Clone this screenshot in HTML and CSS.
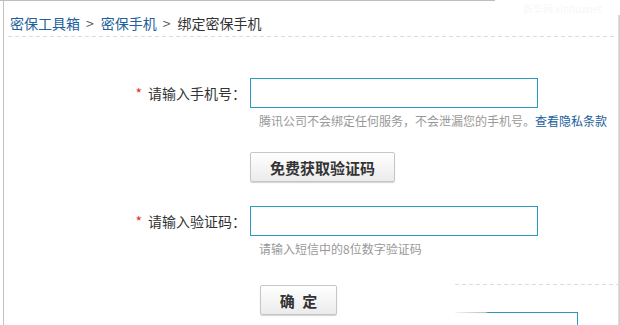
FILE: index.html
```html
<!DOCTYPE html>
<html lang="zh-CN">
<head>
  <meta charset="UTF-8">
  <title>绑定密保手机</title>
  <link rel="stylesheet" href="styles.css">
</head>
<body>
  <div class="topline"></div>
  <div class="page">
    <span class="faint-title">新华网 xinhuanet</span>
    <div class="crumbs">
      <a href="#">密保工具箱</a><span class="sep">&gt;</span><a href="#">密保手机</a><span class="sep">&gt;</span><span class="current">绑定密保手机</span>
    </div>
    <div class="rule"></div>

    <form class="bind-form" onsubmit="return false">
      <div class="row row-phone">
        <label class="label" for="phone"><em>*</em>请输入手机号：</label>
        <div class="field">
          <input type="text" id="phone" class="text-input" autocomplete="off">
          <p class="hint">腾讯公司不会绑定任何服务，不会泄漏您的手机号。<a href="#">查看隐私条款</a></p>
        </div>
      </div>
      <div class="row row-send">
        <span class="label"></span>
        <div class="field">
          <button type="button" class="btn btn-code">免费获取验证码</button>
        </div>
      </div>
      <div class="row row-code">
        <label class="label" for="code"><em>*</em>请输入验证码：</label>
        <div class="field">
          <input type="text" id="code" class="text-input" autocomplete="off">
          <p class="hint">请输入短信中的8位数字验证码</p>
        </div>
      </div>
      <div class="row">
        <span class="label"></span>
        <div class="field">
          <button type="submit" class="btn btn-ok">确 定</button>
        </div>
      </div>
    </form>

    <div class="ghost">
      <div class="ghost-rule"></div>
      <div class="ghost-box"></div>
    </div>
  </div>
</body>
</html>
```

FILE: styles.css
```css
* {
  margin: 0;
  padding: 0;
  box-sizing: border-box;
}
body {
  width: 620px;
  height: 325px;
  overflow: hidden;
  background: #fff;
  font-family: "Noto Sans CJK SC", "Liberation Sans", sans-serif;
  font-size: 14px;
  color: #333;
}
a {
  color: #21609a;
  text-decoration: none;
}
.topline {
  width: 495px;
  height: 1px;
  background: #bdbdbd;
}
.page {
  position: relative;
  margin-left: 3px;
  width: 615px;
  height: 324px;
  border-left: 1px solid #c2c2c2;
}
.page::after {
  content: "";
  position: absolute;
  top: 14px;
  bottom: 0;
  left: 614px;
  width: 2px;
  background: linear-gradient(to right, #e4e4e4, #c8c8c8);
}
.faint-title {
  position: absolute;
  top: 1px;
  left: 519px;
  font-size: 10px;
  line-height: 13px;
  color: #f7f7f7;
}
.crumbs {
  height: 35px;
  padding: 12px 0 0 6px;
  line-height: 20px;
  white-space: nowrap;
}
.crumbs .sep {
  margin: 0 7px 0 6px;
  color: #555;
}
.crumbs .current {
  color: #333;
}
.rule {
  margin-left: 4px;
  width: 609px;
  height: 1px;
  background: repeating-linear-gradient(to right, #dcdcdc 0 4px, transparent 4px 7px);
}

.bind-form {
  padding-top: 41px;
}
.row {
  display: flex;
  align-items: flex-start;
  column-gap: 4px;
}
.row-phone {
  margin-bottom: 22px;
}
.row-send {
  margin-bottom: 24px;
}
.row-code {
  margin-bottom: 27px;
}
.label {
  width: 242px;
  flex: none;
  text-align: right;
  line-height: 30px;
  color: #333;
  white-space: nowrap;
}
.label em {
  font-style: normal;
  color: #e2322b;
  margin-right: 6px;
}
.field {
  flex: 1;
}
.text-input {
  display: block;
  width: 288px;
  height: 30px;
  border: 1px solid #2a9abf;
  outline: none;
  padding: 0 6px;
  font: inherit;
}
.hint {
  margin-top: 4px;
  padding-left: 9px;
  font-size: 12px;
  line-height: 18px;
  color: #999;
  white-space: nowrap;
}
.btn {
  display: block;
  height: 30px;
  border: 1px solid #c6c6c6;
  border-radius: 2px;
  background: linear-gradient(#ffffff, #ebebeb);
  box-shadow: 0 1px 1px rgba(0, 0, 0, 0.18);
  font-family: inherit;
  font-size: 15px;
  font-weight: bold;
  color: #333;
  cursor: pointer;
}
.btn-code {
  width: 145px;
}
.btn-ok {
  margin-left: 10px;
  width: 77px;
  letter-spacing: 2px;
  text-indent: 2px;
}

.ghost {
  position: absolute;
  left: 451px;
  top: 283px;
  width: 163px;
}
.ghost-rule {
  height: 1px;
  background: repeating-linear-gradient(to right, #dcdcdc 0 4px, transparent 4px 7px);
}
.ghost-box {
  margin-top: 27px;
  width: 123px;
  height: 20px;
  border-right: 1px solid #2a97bb;
  background: linear-gradient(to right, rgba(200, 200, 200, 0.2), #bdbdbd 25%, #2a97bb 27%) top / 100% 1px no-repeat;
}
```
